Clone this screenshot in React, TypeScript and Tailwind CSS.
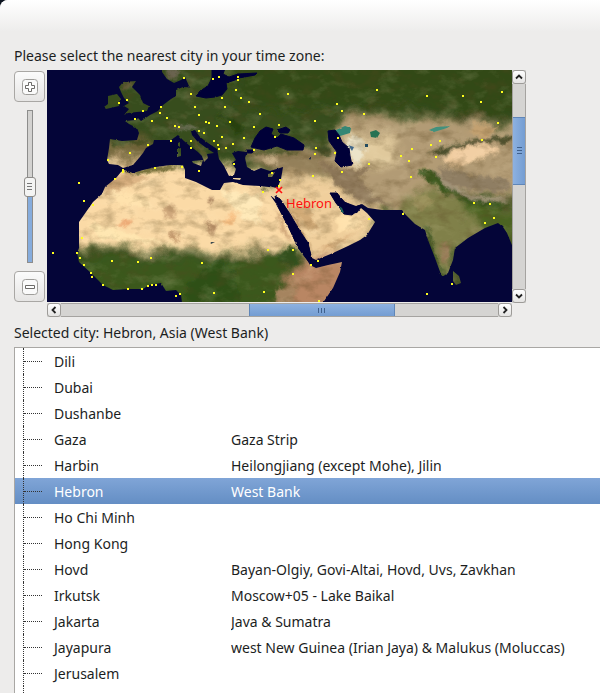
import { useState } from "react";

interface City {
  name: string;
  detail?: string;
}

const CITIES: City[] = [
  { name: "Dili" },
  { name: "Dubai" },
  { name: "Dushanbe" },
  { name: "Gaza", detail: "Gaza Strip" },
  { name: "Harbin", detail: "Heilongjiang (except Mohe), Jilin" },
  { name: "Hebron", detail: "West Bank" },
  { name: "Ho Chi Minh" },
  { name: "Hong Kong" },
  { name: "Hovd", detail: "Bayan-Olgiy, Govi-Altai, Hovd, Uvs, Zavkhan" },
  { name: "Irkutsk", detail: "Moscow+05 - Lake Baikal" },
  { name: "Jakarta", detail: "Java & Sumatra" },
  { name: "Jayapura", detail: "west New Guinea (Irian Jaya) & Malukus (Moluccas)" },
  { name: "Jerusalem" },
];

// City markers in map units
const MARKERS: [number, number][] = [
  [184, 78], [191, 94], [119, 103], [127, 100], [143, 111], [161, 107], [160, 113], [167, 118],
  [152, 121], [135, 119], [195, 107], [199, 115], [175, 126], [179, 127], [199, 131], [204, 133],
  [171, 141], [191, 141], [191, 148], [148, 145], [130, 153], [108, 160], [123, 170], [123, 172],
  [155, 168], [182, 167], [199, 171], [79, 183], [115, 179], [213, 79], [219, 77], [238, 77],
  [238, 80], [236, 90], [222, 98], [241, 98], [249, 102], [225, 107], [260, 114], [288, 94],
  [206, 122], [209, 123], [217, 126], [230, 122], [254, 127], [222, 137], [214, 141], [244, 138],
  [218, 145], [219, 149], [226, 148], [233, 144], [254, 150], [234, 164], [279, 125], [275, 137],
  [315, 121], [337, 104], [342, 111], [338, 138], [316, 148], [315, 154], [335, 153], [342, 172],
  [272, 173], [280, 180], [313, 176], [279, 186], [377, 90], [427, 96], [463, 96], [481, 102],
  [502, 92], [364, 114], [498, 123], [482, 140], [440, 141], [431, 145], [412, 149], [401, 156],
  [409, 161], [436, 157], [411, 177], [369, 164], [84, 201], [93, 205], [82, 238], [53, 253],
  [77, 253], [80, 258], [84, 265], [91, 273], [92, 277], [103, 285], [128, 289], [142, 289],
  [148, 286], [152, 285], [156, 285], [176, 296], [180, 294], [112, 261], [138, 262], [151, 258],
  [202, 263], [214, 293], [264, 292], [293, 274], [293, 250], [268, 250], [263, 192], [311, 265],
  [318, 261], [319, 301], [369, 219], [403, 214], [474, 203], [490, 204], [494, 218], [485, 223],
  [452, 284], [427, 294],
];

const EURASIA =
  "M198 60 L198 88 L183 87 L176 90 L176 96 L171 99 L163 105 L158 111 L150 115 L141 121 L138 118 L136 120 L125 121 L129 124 L137 128 L139 133 L137 140 L122 141 L110 139 L109 148 L107 160 L109 164 L118 165 L123 168 L133 165 L139 158 L143 153 L146 148 L153 144 L154 140 L163 140 L171 140 L178 135 L184 141 L190 146 L198 152 L202 156 L204 162 L208 158 L207 154 L214 153 L205 147 L197 141 L192 135 L191 131 L195 130 L200 137 L208 143 L217 149 L219 159 L224 166 L229 176 L234 175 L236 169 L232 163 L236 160 L232 153 L238 151 L247 152 L245 158 L247 167 L254 171 L261 168 L270 171 L283 167 L281 179 L277 189 L270 186 L272 195 L278 199 L282 201 L290 215 L300 232 L308 243 L312 258 L316 260 L333 253 L348 246 L360 240 L367 235 L375 222 L367 213 L361 208 L357 213 L344 214 L337 204 L330 193 L337 193 L345 202 L356 206 L362 204 L368 208 L382 210 L402 210 L405 214 L415 224 L425 230 L428 240 L435 258 L442 277 L448 273 L453 260 L455 248 L468 238 L485 228 L498 223 L503 227 L507 233 L514 250 L520 60 Z";
const AFRICA =
  "M124 170 L133 173 L143 170 L156 167 L170 165 L183 165 L185 170 L185 178 L196 182 L204 186 L212 190 L220 190 L224 183 L233 182 L243 185 L260 186 L278 188 L276 200 L270 195 L277 205 L288 225 L297 247 L307 260 L310 265 L316 268 L328 265 L342 262 L340 272 L333 288 L318 310 L183 310 L181 295 L176 290 L166 291 L161 283 L149 285 L143 289 L128 289 L113 290 L103 285 L91 273 L79 262 L77 253 L79 248 L79 235 L79 222 L86 212 L93 202 L102 194 L105 187 L116 178 L121 172 Z";

function Land() {
  return (
    <>
      <path d={EURASIA} />
      <path d={AFRICA} />
      <path d="M162 60 L162 72 L167 79 L174 83 L181 80 L185 77 L189 86 L193 91 L198 90 L199 84 L209 82 L212 70 L212 60 Z" />
      <path d="M123 82 L136 81 L132 87 L140 95 L143 103 L149 106 L147 111 L137 112 L128 113 L124 115 L129 109 L124 106 L129 103 L124 98 L121 92 L119 87 Z" />
      <path d="M108 96 L117 94 L121 99 L119 106 L106 109 L104 107 L108 104 Z" />
      <path d="M192 161 L203 160 L201 166 L193 163 Z" />
      <path d="M177 149 L181 148 L181 156 L177 157 Z" />
      <path d="M178 143 L180 142 L180 147 L178 146 Z" />
      <path d="M191 90 L196 92 L193 95 L189 94 Z" />
      <path d="M233 178 L241 178 L240 180 L233 179 Z" />
      <path d="M268 174 L275 172 L272 177 L268 177 Z" />
      <path d="M453 271 L459 276 L461 283 L456 285 L453 281 Z" />
    </>
  );
}

function WorldMap() {
  return (
    <svg viewBox="47 70 465 232" className="block w-full" role="img" aria-label="Time zone map">
      <defs>
        <filter id="coast" x="0" y="0" width="600" height="400" filterUnits="userSpaceOnUse">
          <feTurbulence type="fractalNoise" baseFrequency="0.2" numOctaves="3" seed="4" />
          <feDisplacementMap in="SourceGraphic" scale="2" xChannelSelector="R" yChannelSelector="G" />
          <feGaussianBlur stdDeviation="0.45" />
        </filter>
        <filter id="soft" x="0" y="0" width="600" height="400" filterUnits="userSpaceOnUse">
          <feTurbulence type="fractalNoise" baseFrequency="0.045" numOctaves="4" seed="9" result="n" />
          <feGaussianBlur in="SourceGraphic" stdDeviation="4" result="b" />
          <feDisplacementMap in="b" in2="n" scale="22" xChannelSelector="R" yChannelSelector="G" />
        </filter>
        <filter id="fine" x="0" y="0" width="600" height="400" filterUnits="userSpaceOnUse">
          <feTurbulence type="fractalNoise" baseFrequency="0.12" numOctaves="3" seed="2" result="n" />
          <feGaussianBlur in="SourceGraphic" stdDeviation="1.5" result="b" />
          <feDisplacementMap in="b" in2="n" scale="9" xChannelSelector="R" yChannelSelector="G" />
        </filter>
        <filter id="dark" x="0" y="0" width="600" height="400" filterUnits="userSpaceOnUse">
          <feTurbulence type="fractalNoise" baseFrequency="0.06 0.1" numOctaves="5" seed="12" />
          <feColorMatrix values="0 0 0 0 0.1  0 0 0 0 0.06  0 0 0 0 0.015  2.4 0 0 0 -1.12" />
        </filter>
        <filter id="light" x="0" y="0" width="600" height="400" filterUnits="userSpaceOnUse">
          <feTurbulence type="fractalNoise" baseFrequency="0.05 0.08" numOctaves="5" seed="31" />
          <feColorMatrix values="0 0 0 0 1  0 0 0 0 0.88  0 0 0 0 0.6  0 2.4 0 0 -1.2" />
        </filter>
        <mask id="land" maskUnits="userSpaceOnUse" x="40" y="60" width="480" height="250">
          <g fill="#fff" filter="url(#coast)">
            <Land />
          </g>
        </mask>
      </defs>
      <rect x="47" y="70" width="465" height="232" fill="#040538" />
      <g mask="url(#land)">
        <rect x="40" y="60" width="480" height="250" fill="#374d1d" />
        <g filter="url(#soft)">
          <path d="M230 55 H530 V108 L440 112 L370 104 L300 112 L240 105 Z" fill="#304819" />
          <path d="M100 142 L155 140 L150 165 L105 168 Z" fill="#75693c" />
          <path d="M60 160 L200 160 L285 184 L300 248 L262 250 L220 252 L170 251 L130 248 L60 246 Z" fill="#fbdaa6" />
          <path d="M60 257 L140 255 L215 260 L270 249 L294 258 L300 315 L60 315 Z" fill="#3b591c" />
          <path d="M298 258 L350 255 L345 315 L278 315 Z" fill="#b98663" />
          <path d="M244 150 L340 148 L344 175 L285 174 L248 168 Z" fill="#94805a" />
          <path d="M283 172 L338 178 L384 208 L370 245 L310 264 L270 195 Z" fill="#f0cf9c" />
          <path d="M330 135 L350 112 L400 118 L440 118 L520 126 L520 198 L450 190 L400 212 L355 205 L330 175 Z" fill="#b29b75" />
          <path d="M350 132 L395 138 L400 168 L345 168 Z" fill="#e0c99c" />
          <path d="M405 197 L440 187 L475 208 L520 205 L520 240 L460 244 L447 285 L420 238 L398 216 Z" fill="#80804a" />
          <path d="M460 202 L520 210 L520 250 L480 232 Z" fill="#4b6424" />
          <path d="M440 90 L520 90 L520 116 L460 122 Z" fill="#334819" />
        </g>
        <g filter="url(#fine)">
          <path d="M105 175 L125 173 L150 178 L132 185 L105 196 Z" fill="#d9b080" />
          <path d="M122 170 L160 166 L184 165 L170 170 L130 175 Z" fill="#6f6b35" />
          <path d="M110 139 L140 139 L152 143 L112 145 Z" fill="#405022" />
          <path d="M168 128 L180 125 L196 126 L196 129 L176 130 Z" fill="#6c6f58" />
          <path d="M190 136 L206 150 L208 158 L200 153 Z" fill="#5a5a2c" />
          <path d="M214 114 L233 118 L246 130 L238 134 L225 120 Z" fill="#26400f" />
          <path d="M292 139 L325 147 L333 156 L320 153 Z" fill="#3c4a20" />
          <path d="M250 150 L280 151 L303 150 L290 154 L255 153 Z" fill="#4b5428" />
          <path d="M262 158 L274 156 L280 162 L270 166 Z" fill="#c9b189" />
          <path d="M320 162 L345 170 L372 166 L358 178 L372 195 L395 206 L362 202 L335 184 Z" fill="#8e785a" />
          <path d="M160 208 L172 205 L178 214 L168 220 Z" fill="#cfa77c" />
          <path d="M207 200 L213 199 L213 205 L208 204 Z" fill="#ab8560" />
          <path d="M170 232 L178 233 L178 242 L170 240 Z" fill="#c09468" />
          <path d="M205 222 L218 225 L211 236 Z" fill="#b58d66" />
          <path d="M115 226 L132 218 L128 225 Z" fill="#ea9f6b" />
          <path d="M218 222 L238 212 L232 226 Z" fill="#f7bd80" />
          <path d="M110 190 L145 195 L152 208 L120 205 Z" fill="#ffe2ad" />
          <path d="M90 222 L130 234 L165 242 L190 245 L95 238 Z" fill="#ffe6b0" />
          <path d="M220 190 L260 195 L258 225 L240 215 Z" fill="#ffe9b8" />
          <path d="M275 208 L284 222 L292 244 L282 232 Z" fill="#d1a87b" />
          <path d="M284 203 L292 213 L303 232 L312 252 L300 236 L288 212 Z" fill="#ac8458" />
          <path d="M288 205 L310 206 L318 230 L304 228 Z" fill="#d1aa77" />
          <path d="M318 250 L345 238 L358 232 L330 250 Z" fill="#d5aa78" />
          <path d="M335 215 L358 217 L365 225 L338 232 Z" fill="#ffe1ac" />
          <path d="M346 140 L352 134 L362 139 L366 150 L358 166 L350 158 Z" fill="#ece4c9" />
          <path d="M444 158 L458 147 L483 143 L502 151 L482 158 L460 166 L446 164 Z" fill="#f0cc9f" />
          <path d="M450 157 L464 149 L484 146 L497 151 L480 156 L460 163 Z" fill="#f2cfa4" />
          <path d="M428 153 L450 145 L480 139 L512 136 L512 142 L484 142 L455 148 L440 156 Z" fill="#4a4d29" />
          <path d="M438 166 L470 174 L510 181 L512 190 L480 192 L445 184 Z" fill="#8f7e63" />
          <path d="M417 171 L434 171 L446 187 L478 201 L512 203 L512 209 L476 206 L440 191 Z" fill="#3b561d" />
          <path d="M432 168 L448 188 L478 201 L512 200 L500 197 L480 197 L452 186 Z" fill="#a5967d" />
          <path d="M413 201 L426 192 L434 202 L420 213 Z" fill="#99905a" />
          <path d="M424 225 L430 232 L441 270 L438 270 L429 250 Z" fill="#3f5724" />
          <path d="M441 243 L451 243 L446 264 L440 257 Z" fill="#957955" />
          <path d="M474 122 L500 128 L486 139 L468 133 Z" fill="#c3a171" />
          <path d="M164 68 L180 70 L176 79 L168 78 Z" fill="#6a6450" />
          <path d="M123 82 L136 82 L128 89 L121 90 Z" fill="#5b5431" />
          <path d="M187 283 L215 262 L235 270 L240 302 L187 302 Z" fill="#2f5016" />
          <path d="M276 255 L292 246 L300 260 L292 268 Z" fill="#31501c" />
          <path d="M276 290 L296 285 L292 302 L278 302 Z" fill="#a5845f" />
          <path d="M262 187 L268 187 L265 192 Z" fill="#3a4d22" />
        </g>
        <g opacity="0.32">
          <rect x="40" y="60" width="480" height="250" filter="url(#dark)" />
        </g>
        <g opacity="0.16">
          <rect x="40" y="60" width="480" height="250" filter="url(#light)" />
        </g>
      </g>
      {/* Inland seas */}
      <g filter="url(#coast)">
        <path d="M334 131 L345 126 L351 128 L350 133 L340 136 Z" fill="#358775" />
        <path d="M348 145 L354 147 L352 151 Z" fill="#42688a" />
        <path d="M370 132 L376 130 L380 133 L377 138 L371 137 Z" fill="#287253" />
        <path d="M365 144 L368 144 L368 147 L365 147 Z" fill="#234b60" />
        <path d="M429 130 L436 127 L450 126 L447 128 L434 132 Z" fill="#43917d" />
        <g fill="#040538" stroke="#040538" strokeLinejoin="round">
          <path d="M212 60 L212 78 L208 86 L200 91 L196 96 L206 98 L215 97 L222 95 L227 89 L226 83 L235 80 L239 78 L255 75 L257 73 L238 74 L229 77 L223 74 L228 60 Z" />
          <path d="M251 147 L255 138 L260 131 L266 127 L273 129 L271 134 L277 138 L281 134 L294 138 L304 145 L303 150 L287 150 L277 146 L264 150 Z" />
          <path d="M277 130 L286 127 L290 130 L288 133 L280 133 Z" />
          <path d="M328 131 L335 130 L339 135 L342 142 L349 148 L350 156 L352 165 L341 167 L335 161 L337 152 L329 141 Z" />
          <path d="M275 196 L280 199 L290 214 L300 231 L308 243 L312 260 L309 262 L298 247 L288 226 L277 205 Z" />
          <path d="M330 193 L337 193 L344 202 L355 207 L361 205 L359 209 L352 215 L344 214 L340 208 L336 203 Z" />
          <path d="M246 150 L254 150 L252 153 L247 153 Z" />
        </g>
        <path d="M309 158 L311 158 L310 160 Z" fill="#141a38" />
        <path d="M210 242 L215 242 L211 244 Z" fill="#3a4a50" />
        <path d="M339 206 L342 208 L344 213 L342 212 Z" fill="#1d695c" />
      </g>
      <g fill="#ffff1e">
        {MARKERS.map(([x, y]) => (
          <rect key={`${x}-${y}`} x={x - 1} y={y - 1} width="2" height="2" />
        ))}
      </g>
      <path d="M276 187 L282 193 M282 187 L276 193" stroke="#ff1010" strokeWidth="1.6" />
      <text x="286" y="208" fill="#ff1010" fontSize="13">
        Hebron
      </text>
    </svg>
  );
}

const scrollButton =
  "flex size-[14px] shrink-0 items-center justify-center rounded-[3px] border border-[#9d9b98] bg-linear-to-b from-white to-[#e4e3e2]";

function Chevron({ d, label }: { d: string; label: string }) {
  return (
    <button className={scrollButton} aria-label={label}>
      <svg viewBox="0 0 8 8" className="size-2" fill="none" stroke="#222" strokeWidth="1.8">
        <path d={d} />
      </svg>
    </button>
  );
}

function ZoomButton({ label, d, onClick }: { label: string; d: string; onClick: () => void }) {
  return (
    <button
      aria-label={label}
      onClick={onClick}
      className="flex size-[31px] shrink-0 items-center justify-center rounded-[4px] border border-[#a9a7a4] bg-linear-to-b from-[#fbfbfb] to-[#e6e5e4]"
    >
      <svg viewBox="0 0 18 18" className="size-[18px]" fill="none">
        <rect x="1.5" y="1.5" width="15" height="15" rx="3" fill="#fafafa" stroke="#9f9e9b" />
        <path d={d} fill="#fff" stroke="#6c6b69" />
      </svg>
    </button>
  );
}

export default function App() {
  const [selected, setSelected] = useState("Hebron");
  const [zoom, setZoom] = useState(50);
  const city = CITIES.find((c) => c.name === selected);

  return (
    <div className="min-h-screen bg-[#0d1420] font-['Noto_Sans','Open_Sans',sans-serif] text-sm text-[#1c1e1e]">
      <main className="flex min-h-screen flex-col rounded-tl-lg bg-[#edeceb]">
        <header className="h-8 shrink-0 rounded-tl-lg bg-linear-to-b from-white to-[#edeceb]" />

        <section className="px-[14px] pt-[14px]">
          <p>Please select the nearest city in your time zone:</p>
          <div className="mt-1 flex max-w-[512px]">
            {/* Zoom column */}
            <div className="mb-4 mr-[2px] flex flex-col items-center pt-px">
              <ZoomButton
                label="Zoom in"
                d="M7.5 4.5 h3 v3 h3 v3 h-3 v3 h-3 v-3 h-3 v-3 h3 Z"
                onClick={() => setZoom(Math.min(100, zoom + 10))}
              />
              <div className="flex min-h-0 flex-1 py-2">
                <input
                  type="range"
                  aria-label="Map zoom"
                  value={zoom}
                  onChange={(e) => setZoom(Number(e.target.value))}
                  className="h-[153px] w-3 appearance-none bg-transparent [writing-mode:vertical-lr] [direction:rtl] [&::-webkit-slider-runnable-track]:w-[6px] [&::-webkit-slider-runnable-track]:border [&::-webkit-slider-runnable-track]:border-[#8d8d8c] [&::-webkit-slider-runnable-track]:[background:linear-gradient(to_top,#86acdc_var(--fill),#d3d2d0_var(--fill))] [&::-webkit-slider-thumb]:-ml-1 [&::-webkit-slider-thumb]:h-5 [&::-webkit-slider-thumb]:w-3 [&::-webkit-slider-thumb]:appearance-none [&::-webkit-slider-thumb]:rounded-[3px] [&::-webkit-slider-thumb]:border [&::-webkit-slider-thumb]:border-[#8d8b88] [&::-webkit-slider-thumb]:[background:repeating-linear-gradient(#777_0_1px,transparent_1px_3px)_center/5px_7px_no-repeat,#f4f4f3]"
                  style={{ "--fill": `${zoom}%` } as React.CSSProperties}
                />
              </div>
              <ZoomButton
                label="Zoom out"
                d="M4.5 7.5 h9 v3 h-9 Z"
                onClick={() => setZoom(Math.max(0, zoom - 10))}
              />
            </div>

            {/* Map viewport */}
            <div className="min-w-0 flex-1">
              <WorldMap />
              <div className="mt-px flex bg-[#d5d4d2]">
                <Chevron label="Scroll left" d="M5.5 1 L2.5 4 L5.5 7" />
                <div className="flex flex-1 border-y border-[#a5a3a0]">
                  <div className="w-[43%]" />
                  <div className="flex w-1/3 items-center justify-center gap-[2px] border-x border-[#5f86b8] bg-linear-to-b from-[#8db1e0] to-[#749dd2]">
                    <span className="h-[5px] w-px bg-[#3f608c]" />
                    <span className="h-[5px] w-px bg-[#3f608c]" />
                    <span className="h-[5px] w-px bg-[#3f608c]" />
                  </div>
                </div>
                <Chevron label="Scroll right" d="M2.5 1 L5.5 4 L2.5 7" />
              </div>
            </div>

            <div className="mb-[15px] flex flex-col bg-[#d5d4d2]">
              <Chevron label="Scroll up" d="M1 5.5 L4 2.5 L7 5.5" />
              <div className="flex flex-1 flex-col border-x border-[#a5a3a0]">
                <div className="h-[16%]" />
                <div className="flex h-1/3 flex-col items-center justify-center gap-[2px] border-y border-[#5f86b8] bg-linear-to-r from-[#8db1e0] to-[#749dd2]">
                  <span className="h-px w-[5px] bg-[#3f608c]" />
                  <span className="h-px w-[5px] bg-[#3f608c]" />
                  <span className="h-px w-[5px] bg-[#3f608c]" />
                </div>
              </div>
              <Chevron label="Scroll down" d="M1 2.5 L4 5.5 L7 2.5" />
            </div>
          </div>
          <p className="mt-[5px]">
            Selected city: {selected}, Asia{city?.detail ? ` (${city.detail})` : ""}
          </p>
        </section>

        {/* City tree */}
        <section className="ml-[14px] mt-1 flex flex-1 flex-col border-l border-t border-[#a9a7a4] bg-white">
          <table className="w-full table-fixed border-collapse">
            <colgroup>
              <col className="w-[39px]" />
              <col className="w-[177px]" />
              <col />
            </colgroup>
            <tbody>
              {CITIES.map(({ name, detail }) => (
                <tr
                  key={name}
                  onClick={() => setSelected(name)}
                  className={
                    name === selected
                      ? "bg-linear-to-b from-[#80a5d7] to-[#648ec4] text-white"
                      : ""
                  }
                >
                  <td className="p-0">
                    <div className="ml-2 flex h-[26px] items-center border-l border-dotted border-[#333]">
                      <span className="w-[18px] border-t border-dotted border-[#333]" />
                    </div>
                  </td>
                  <td className="p-0 pt-[2px]">
                    <button className="block">{name}</button>
                  </td>
                  <td className="truncate p-0 pt-[2px]">{detail}</td>
                </tr>
              ))}
            </tbody>
          </table>
          <div className="ml-2 flex-1 border-l border-dotted border-[#333]" />
        </section>
      </main>
    </div>
  );
}
